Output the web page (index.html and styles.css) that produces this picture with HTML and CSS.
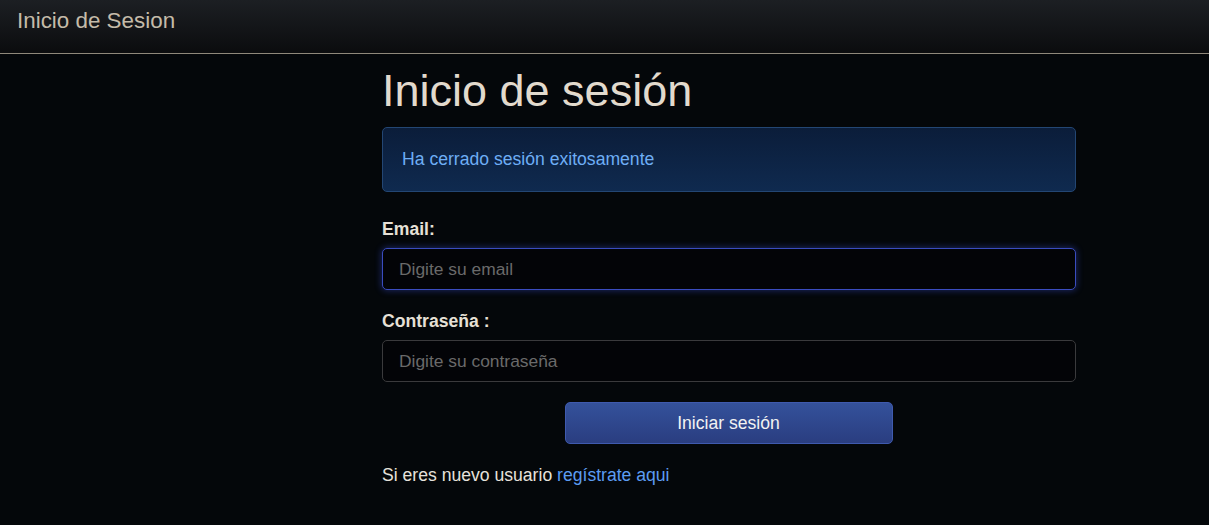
FILE: index.html
```html
<!DOCTYPE html>
<html lang="es">
<head>
<meta charset="utf-8">
<title>Inicio de Sesion</title>
<link rel="stylesheet" href="styles.css">
</head>
<body>
<header class="topbar">
  <span class="brand">Inicio de Sesion</span>
</header>
<main class="container">
  <h1 class="title">Inicio de sesión</h1>
  <div class="alert">Ha cerrado sesión exitosamente</div>
  <form class="form">
    <div class="field">
      <label class="label" for="email">Email:</label>
      <input class="input input-focus" id="email" type="text" placeholder="Digite su email">
    </div>
    <div class="field">
      <label class="label" for="pass">Contraseña :</label>
      <input class="input" id="pass" type="password" placeholder="Digite su contraseña">
    </div>
    <div class="actions">
      <button class="btn" type="button">Iniciar sesión</button>
    </div>
  </form>
  <p class="footer-text">Si eres nuevo usuario <a class="link" href="#">regístrate aqui</a></p>
</main>
</body>
</html>
```
FILE: styles.css
```css
* { box-sizing: border-box; }
html, body {
  margin: 0;
  padding: 0;
  background: #04070a;
  font-family: "Liberation Sans", Arial, sans-serif;
  color: #e4ddd2;
}
.topbar {
  height: 54px;
  background: linear-gradient(to bottom, #1c1f23, #0b0c0e);
  border-bottom: 1px solid #8f887b;
  display: flex;
  align-items: flex-start;
  padding: 7px 17px 0;
}
.brand {
  font-size: 22.4px;
  color: #c4bba9;
  line-height: 28px;
}
.container {
  width: 694px;
  margin: 0 0 0 382px;
  padding-top: 12px;
}
.title {
  margin: 0;
  font-size: 45px;
  font-weight: 400;
  line-height: 50px;
  color: #e2dacd;
}
.alert {
  margin-top: 11px;
  height: 65px;
  border: 1px solid #234673;
  border-radius: 5px;
  background: linear-gradient(to bottom, #0b1d3a, #0f2a4f);
  color: #6eaef5;
  font-size: 17.6px;
  display: flex;
  align-items: center;
  padding: 0 19px;
}
.form { margin-top: 27px; }
.field { margin-bottom: 21px; }
.label {
  display: block;
  font-weight: 700;
  font-size: 17.6px;
  line-height: 21px;
  color: #e6e0d6;
  margin-bottom: 8px;
}
.input {
  display: block;
  width: 100%;
  height: 42px;
  border: 1px solid #3a3a3c;
  border-radius: 5px;
  background: #030407;
  color: #ddd;
  font-family: "Liberation Sans", Arial, sans-serif;
  font-size: 17.4px;
  padding: 0 16px;
  outline: none;
}
.input::placeholder { color: #6a6a6a; }
.input-focus {
  border-color: #3a4cbf;
  box-shadow: 0 0 6px 1px rgba(50, 70, 190, 0.45);
}
.actions {
  display: flex;
  justify-content: center;
}
.btn {
  width: 328px;
  height: 42px;
  border: 1px solid #3f5aae;
  border-radius: 5px;
  background: linear-gradient(to bottom, #34519b, #2a3d80);
  color: #f2f2f2;
  font-family: "Liberation Sans", Arial, sans-serif;
  font-size: 17.6px;
  margin-top: -1px;
  margin-left: -1px;
}
.footer-text {
  margin: 21px 0 0;
  font-size: 17.6px;
  line-height: 20px;
  color: #e6e2dc;
}
.link {
  color: #5c9cf2;
  text-decoration: none;
}
```
